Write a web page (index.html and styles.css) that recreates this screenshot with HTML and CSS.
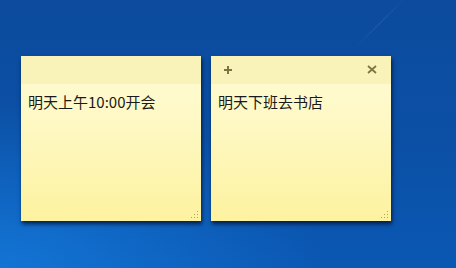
FILE: index.html
```
<!DOCTYPE html>
<html lang="zh">
<head>
<meta charset="utf-8">
<link rel="stylesheet" href="styles.css">
</head>
<body>
<div class="desktop">
  <div class="streak"></div>
  <div class="notes">
    <div class="note">
      <div class="note-head"></div>
      <div class="note-body">明天上午10:00开会</div>
      <svg class="grip" width="8" height="8" viewBox="0 0 8 8"><g fill="#b0a560"><rect x="6" y="0" width="1" height="1"/><rect x="6" y="3" width="1" height="1"/><rect x="3" y="3" width="1" height="1"/><rect x="6" y="6" width="1" height="1"/><rect x="3" y="6" width="1" height="1"/><rect x="0" y="6" width="1" height="1"/></g></svg>
    </div>
    <div class="note">
      <div class="note-head">
        <svg class="icon" width="10" height="10" viewBox="0 0 10 10"><path d="M5 1v8M1 5h8" stroke="#7d7442" stroke-width="2"/></svg>
        <svg class="icon" width="10" height="9" viewBox="0 0 10 9"><path d="M1 1l8 7M9 1L1 8" stroke="#7d7442" stroke-width="1.7"/></svg>
      </div>
      <div class="note-body">明天下班去书店</div>
      <svg class="grip" width="8" height="8" viewBox="0 0 8 8"><g fill="#b0a560"><rect x="6" y="0" width="1" height="1"/><rect x="6" y="3" width="1" height="1"/><rect x="3" y="3" width="1" height="1"/><rect x="6" y="6" width="1" height="1"/><rect x="3" y="6" width="1" height="1"/><rect x="0" y="6" width="1" height="1"/></g></svg>
    </div>
  </div>
</div>
</body>
</html>
```
FILE: styles.css
```
html, body {
  margin: 0;
  padding: 0;
}
body {
  width: 456px;
  height: 268px;
  overflow: hidden;
  font-family: "Noto Sans CJK SC", "Noto Sans", sans-serif;
}
.desktop {
  position: relative;
  width: 456px;
  height: 268px;
  background:
    radial-gradient(ellipse 320px 170px at 0% 100%, rgba(25,135,235,0.6), rgba(25,135,235,0) 100%),
    linear-gradient(180deg, #0c4b9d 0%, #0b50a6 55%, #0a58b3 100%);
}
.streak {
  position: absolute;
  left: 380px;
  top: -15px;
  width: 1px;
  height: 75px;
  background: linear-gradient(180deg, rgba(120,170,230,0), rgba(120,170,230,0.18), rgba(120,170,230,0));
  transform: rotate(45deg);
}
.notes {
  display: flex;
  gap: 10px;
  padding: 56px 0 0 21px;
}
.note {
  position: relative;
  width: 180px;
  height: 165px;
  display: flex;
  flex-direction: column;
  background: linear-gradient(180deg, #fffcd6 0%, #fef8c4 40%, #fdf29f 100%);
  box-shadow: 1px 3px 4px rgba(0, 10, 40, 0.75);
}
.note-head {
  height: 28px;
  flex: none;
  background: #f9f3b9;
  display: flex;
  justify-content: space-between;
  align-items: center;
  padding: 0 14px 1px 12px;
  box-sizing: border-box;
}
.icon {
  display: block;
}
.note-body {
  padding: 8px 0 0 7px;
  font-size: 15px;
  line-height: 20px;
  color: #1a1a1a;
}
.grip {
  position: absolute;
  right: 2px;
  bottom: 2px;
}
```
